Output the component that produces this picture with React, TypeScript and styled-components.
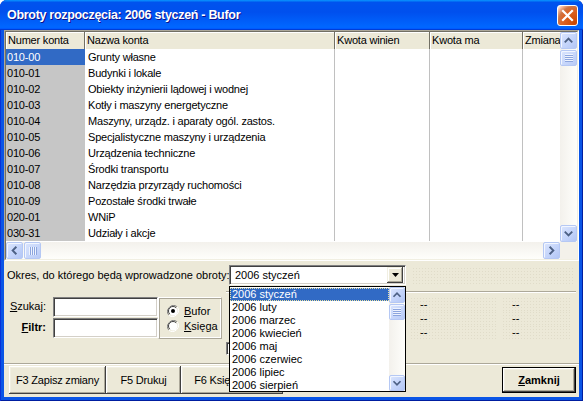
import styled, { createGlobalStyle } from "styled-components";

const GlobalStyle = createGlobalStyle`
  html, body { margin: 0; padding: 0; background: #ffffff; }
  body { font-family: "Liberation Sans", Arial, sans-serif; font-size: 11px; color: #000; }
  * { box-sizing: border-box; }
`;

const accounts = [
  ["010-00", "Grunty własne"],
  ["010-01", "Budynki i lokale"],
  ["010-02", "Obiekty inżynierii lądowej i wodnej"],
  ["010-03", "Kotły i maszyny energetyczne"],
  ["010-04", "Maszyny, urządz. i aparaty ogól. zastos."],
  ["010-05", "Specjalistyczne maszyny i urządzenia"],
  ["010-06", "Urządzenia techniczne"],
  ["010-07", "Środki transportu"],
  ["010-08", "Narzędzia przyrządy ruchomości"],
  ["010-09", "Pozostałe środki trwałe"],
  ["020-01", "WNiP"],
  ["030-31", "Udziały i akcje"],
];

const months = [
  "2006 styczeń",
  "2006 luty",
  "2006 marzec",
  "2006 kwiecień",
  "2006 maj",
  "2006 czerwiec",
  "2006 lipiec",
  "2006 sierpień",
];

const COLS = "79px 250px 95px 93px 90px";

const Window = styled.div`
  width: 583px;
  height: 401px;
  display: flex;
  flex-direction: column;
  background: #0a55e6;
  border-radius: 7px 7px 0 0;
  overflow: hidden;
  box-shadow: inset 1px 0 #0831d9, inset -1px 0 #001ea0, inset 0 -1px #001ea0;
`;

const TitleBar = styled.div`
  height: 30px;
  flex: none;
  display: flex;
  align-items: center;
  padding: 0 5px 0 7px;
  background: linear-gradient(
    180deg,
    #0997ff,
    #0053ee 8%,
    #0050ee 40%,
    #0066ff 88%,
    #0066ff 93%,
    #005bff 95%,
    #003dd7 96%,
    #003dd7
  );
`;

const Title = styled.div`
  flex: 1;
  color: #fff;
  font-weight: bold;
  font-size: 12.5px;
  letter-spacing: -0.3px;
  text-shadow: 1px 1px #0f1089;
`;

const CloseButton = styled.div`
  width: 21px;
  height: 21px;
  border: 1px solid #fff;
  border-radius: 3px;
  display: flex;
  align-items: center;
  justify-content: center;
  background: radial-gradient(
    circle at 90% 90%,
    #cc4600 0%,
    #dc6527 55%,
    #cd7546 70%,
    #ffccb2 90%,
    #fff 100%
  );
`;

const Client = styled.div`
  flex: 1;
  margin: 0 4px 4px;
  background: #ece9d8;
  display: flex;
  flex-direction: column;
`;

const GridFrame = styled.div`
  height: 231px;
  border: 1px solid;
  border-color: #aca899 #fff #fff #aca899;
`;

const GridInner = styled.div`
  height: 100%;
  border: 1px solid;
  border-color: #716f64 #f1efe2 #f1efe2 #716f64;
  display: grid;
  grid-template-columns: 1fr 17px;
  grid-template-rows: 1fr 17px;
`;

const TableArea = styled.div`
  overflow: hidden;
  background: #fff;
  letter-spacing: -0.2px;
`;

const HeaderRow = styled.div`
  display: grid;
  grid-template-columns: ${COLS};
  height: 17px;
`;

const HeaderCell = styled.div`
  background: #ece9d8;
  border-right: 1px solid #716f64;
  box-shadow: inset 1px 1px #fff;
  padding-left: 2px;
  line-height: 16px;
  white-space: nowrap;
  overflow: hidden;
`;

const BodyRow = styled.div`
  display: grid;
  grid-template-columns: ${COLS};
  height: 16px;
`;

const Cell = styled.div<{ $kind?: "code" | "selected" | "line" | "plain" }>`
  line-height: 16px;
  white-space: nowrap;
  overflow: hidden;
  padding-left: ${(p) => (p.$kind === "code" || p.$kind === "selected" ? "1px" : "3px")};
  background: ${(p) =>
    p.$kind === "selected" ? "#316ac5" : p.$kind === "code" ? "#c6c6c6" : "#fff"};
  color: ${(p) => (p.$kind === "selected" ? "#fff" : "#000")};
  border-right: ${(p) => (p.$kind === "line" ? "1px solid #c0c0c0" : "none")};
`;

const VScroll = styled.div<{ $w?: number }>`
  display: flex;
  flex-direction: column;
  width: ${(p) => p.$w ?? 17}px;
  background: linear-gradient(90deg, #f3f1ec, #fefefb);
`;

const HScroll = styled.div`
  display: flex;
  flex-direction: row;
  background: linear-gradient(180deg, #f3f1ec, #fefefb);
`;

const Corner = styled.div`
  background: #f3f1ea;
`;

const ScrollButton = styled.div<{ $size?: number }>`
  flex: none;
  width: ${(p) => p.$size ?? 17}px;
  height: ${(p) => p.$size ?? 17}px;
  border: 1px solid #b5c8f4;
  border-radius: 2px;
  box-shadow: inset 1px 1px #f2f6ff;
  background: linear-gradient(135deg, #dbe5fd 0%, #c6d6fb 50%, #b3c6f5 100%);
  display: flex;
  align-items: center;
  justify-content: center;
`;

const Thumb = styled.div<{ $vertical?: boolean; $size?: number }>`
  flex: none;
  width: ${(p) => (p.$vertical ? `${p.$size ?? 17}px` : "17px")};
  height: ${(p) => (p.$vertical ? "16px" : `${p.$size ?? 17}px`)};
  margin: ${(p) => (p.$vertical ? "1px 0 0" : "0 0 0 1px")};
  border: 1px solid #b5c8f4;
  border-radius: 2px;
  box-shadow: inset 1px 1px #f2f6ff;
  background: linear-gradient(135deg, #dbe5fd 0%, #c9d8fb 50%, #b8caf6 100%);
  display: flex;
  align-items: center;
  justify-content: center;
`;

const Track = styled.div`
  flex: 1;
`;

const PeriodRow = styled.div`
  margin-top: 4px;
  height: 20px;
  display: flex;
  align-items: center;
`;

const PeriodLabel = styled.div`
  width: 225px;
  padding-left: 3px;
  white-space: nowrap;
`;

const ComboWrap = styled.div`
  position: relative;
  width: 177px;
  height: 20px;
  flex: none;
`;

const Combo = styled.div`
  height: 20px;
  display: flex;
  align-items: center;
  background: #fff;
  border: 1px solid;
  border-color: #808080 #fff #fff #808080;
  box-shadow: inset 1px 1px #404040, inset -1px -1px #d4d0c8;
  padding: 0 2px 0 5px;
`;

const ComboText = styled.div`
  flex: 1;
`;

const ComboButton = styled.div`
  width: 16px;
  height: 16px;
  background: #ece9d8;
  box-shadow: inset -1px -1px #404040, inset 1px 1px #f1efe2, inset -2px -2px #aca899, inset 2px 2px #fff;
  display: flex;
  align-items: center;
  justify-content: center;
`;

const DottedFill = styled.div`
  flex: 1;
  height: 17px;
  margin: 0 6px 0 6px;
  background-image: radial-gradient(circle, #e0dcc9 0.7px, transparent 0.9px);
  background-size: 3px 3px;
`;

const DropList = styled.div`
  position: absolute;
  top: 21px;
  left: 0;
  width: 177px;
  height: 106px;
  border: 1px solid #000;
  background: #fff;
  z-index: 10;
  display: flex;
`;

const ListItems = styled.div`
  flex: 1;
  padding-top: 1px;
`;

const ListItem = styled.div<{ $selected?: boolean }>`
  height: 13px;
  line-height: 13px;
  padding-left: 2px;
  white-space: nowrap;
  background: ${(p) => (p.$selected ? "#316ac5" : "transparent")};
  color: ${(p) => (p.$selected ? "#fff" : "#000")};
  outline: ${(p) => (p.$selected ? "1px dotted #e8e0a0" : "none")};
  outline-offset: -1px;
`;

const Middle = styled.div`
  flex: 1;
  display: flex;
`;

const SearchArea = styled.div`
  display: flex;
  padding: 12px 0 0 5px;
  align-items: flex-start;
`;

const Fields = styled.div`
  display: grid;
  grid-template-columns: 37px 105px;
  grid-auto-rows: 20px;
  column-gap: 7px;
  row-gap: 1px;
`;

const FieldLabel = styled.div<{ $bold?: boolean }>`
  text-align: right;
  line-height: 18px;
  font-weight: ${(p) => (p.$bold ? "bold" : "normal")};
`;

const Input = styled.div`
  background: #fff;
  border: 1px solid;
  border-color: #808080 #fff #fff #808080;
  box-shadow: inset 1px 1px #404040, inset -1px -1px #d4d0c8;
`;

const RadioBox = styled.div`
  width: 64px;
  height: 42px;
  border: 1px solid;
  border-color: #fff #aca899 #aca899 #fff;
  box-shadow: inset 1px 1px #aca899, inset -1px -1px #fff;
  display: flex;
  flex-direction: column;
  justify-content: center;
  gap: 1px;
  padding-left: 8px;
`;

const RadioRow = styled.div`
  display: flex;
  align-items: center;
  gap: 5px;
  height: 14px;
`;

const Stats = styled.div`
  flex: 1;
  margin: 6px 3px 0 4px;
  border-top: 1px solid #aca899;
  box-shadow: inset 0 1px #fff;
  padding-top: 5px;
`;

const StatRow = styled.div`
  display: grid;
  grid-template-columns: 184px 92px 1fr;
  height: 14px;
`;

const StatValue = styled.div`
  line-height: 14px;
  padding-left: 10px;
  margin-right: 6px;
  background-image: radial-gradient(circle, #e0dcc9 0.7px, transparent 0.9px);
  background-size: 3px 3px;
`;

const CheckBox = styled.div`
  width: 13px;
  height: 13px;
  margin-top: 3px;
  background: #fff;
  border: 1px solid;
  border-color: #808080 #fff #fff #808080;
  box-shadow: inset 1px 1px #404040, inset -1px -1px #d4d0c8;
`;

const Separator = styled.div`
  height: 2px;
  border-top: 1px solid #aca899;
  border-bottom: 1px solid #fff;
`;

const ButtonBar = styled.div`
  height: 32px;
  display: flex;
  align-items: center;
  padding: 0 3px 2px 5px;
`;

const Button = styled.div<{ $w: number; $default?: boolean }>`
  width: ${(p) => p.$w}px;
  height: ${(p) => (p.$default ? 26 : 28)}px;
  margin-left: ${(p) => (p.$default ? "auto" : "0")};
  display: flex;
  align-items: center;
  justify-content: center;
  white-space: nowrap;
  overflow: hidden;
  letter-spacing: ${(p) => (p.$default ? "0" : "-0.2px")};
  background: #ece9d8;
  font-weight: ${(p) => (p.$default ? "bold" : "normal")};
  border: ${(p) => (p.$default ? "1px solid #000" : "none")};
  box-shadow: inset -1px -1px #404040, inset 1px 1px #fff, inset -2px -2px #aca899,
    inset 2px 2px #f1efe2;
`;

const Chevron = ({ dir, size = 15 }: { dir: "up" | "down" | "left" | "right"; size?: number }) => {
  const pts = {
    up: "4,10 8,6 12,10",
    down: "4,6 8,10 12,6",
    left: "10,4 6,8 10,12",
    right: "6,4 10,8 6,12",
  }[dir];
  return (
    <svg width={size} height={size} viewBox="0 0 16 16">
      <polyline points={pts} fill="none" stroke="#4d6185" strokeWidth="2" />
    </svg>
  );
};

const Grip = ({ vertical }: { vertical?: boolean }) => (
  <svg width="8" height="8" viewBox="0 0 8 8">
    {[1, 3, 5, 7].map((v) =>
      vertical ? (
        <line key={v} x1="0" y1={v - 0.5} x2="8" y2={v - 0.5} stroke="#eef3fe" strokeWidth="1" />
      ) : (
        <line key={v} x1={v - 0.5} y1="0" x2={v - 0.5} y2="8" stroke="#eef3fe" strokeWidth="1" />
      ),
    )}
    {[2, 4, 6, 8].map((v) =>
      vertical ? (
        <line key={v} x1="0" y1={v - 0.5} x2="8" y2={v - 0.5} stroke="#8ca5de" strokeWidth="1" />
      ) : (
        <line key={v} x1={v - 0.5} y1="0" x2={v - 0.5} y2="8" stroke="#8ca5de" strokeWidth="1" />
      ),
    )}
  </svg>
);

const Radio = ({ checked }: { checked?: boolean }) => (
  <svg width="12" height="12" viewBox="0 0 12 12">
    <path d="M10.2 1.8 A6 6 0 0 0 1.8 10.2" fill="none" stroke="#808080" />
    <path d="M1.8 10.2 A6 6 0 0 0 10.2 1.8" fill="none" stroke="#fff" />
    <circle cx="6" cy="6" r="4.5" fill="#fff" />
    <path d="M9.2 2.8 A4.5 4.5 0 0 0 2.8 9.2" fill="none" stroke="#404040" />
    {checked && <circle cx="6" cy="6" r="2" fill="#000" />}
  </svg>
);

const App = () => {
  return (
    <>
      <GlobalStyle />
      <Window>
        <TitleBar>
          <Title>Obroty rozpoczęcia: 2006 styczeń - Bufor</Title>
          <CloseButton>
            <svg width="13" height="13" viewBox="0 0 13 13">
              <path d="M2 2 L11 11 M11 2 L2 11" stroke="#fff" strokeWidth="2.2" strokeLinecap="square" />
            </svg>
          </CloseButton>
        </TitleBar>
        <Client>
          <GridFrame>
            <GridInner>
              <TableArea>
                <HeaderRow>
                  <HeaderCell>Numer konta</HeaderCell>
                  <HeaderCell>Nazwa konta</HeaderCell>
                  <HeaderCell>Kwota winien</HeaderCell>
                  <HeaderCell>Kwota ma</HeaderCell>
                  <HeaderCell>Zmiana</HeaderCell>
                </HeaderRow>
                {accounts.map(([code, name], i) => (
                  <BodyRow key={code}>
                    <Cell $kind={i === 0 ? "selected" : "code"}>{code}</Cell>
                    <Cell $kind="line">{name}</Cell>
                    <Cell $kind="line" />
                    <Cell $kind="line" />
                    <Cell $kind="plain" />
                  </BodyRow>
                ))}
              </TableArea>
              <VScroll>
                <ScrollButton>
                  <Chevron dir="up" />
                </ScrollButton>
                <Thumb $vertical>
                  <Grip vertical />
                </Thumb>
                <Track />
                <ScrollButton>
                  <Chevron dir="down" />
                </ScrollButton>
              </VScroll>
              <HScroll>
                <ScrollButton>
                  <Chevron dir="left" />
                </ScrollButton>
                <Thumb>
                  <Grip />
                </Thumb>
                <Track />
                <ScrollButton>
                  <Chevron dir="right" />
                </ScrollButton>
              </HScroll>
              <Corner />
            </GridInner>
          </GridFrame>

          <PeriodRow>
            <PeriodLabel>Okres, do którego będą wprowadzone obroty:</PeriodLabel>
            <ComboWrap>
              <Combo>
                <ComboText>2006 styczeń</ComboText>
                <ComboButton>
                  <svg width="7" height="4" viewBox="0 0 7 4">
                    <path d="M0 0 H7 L3.5 4 Z" fill="#000" />
                  </svg>
                </ComboButton>
              </Combo>
              <DropList>
                <ListItems>
                  {months.map((m, i) => (
                    <ListItem key={m} $selected={i === 0}>
                      {m}
                    </ListItem>
                  ))}
                </ListItems>
                <VScroll $w={16}>
                  <ScrollButton $size={16}>
                    <Chevron dir="up" size={14} />
                  </ScrollButton>
                  <Thumb $vertical $size={16}>
                    <Grip vertical />
                  </Thumb>
                  <Track />
                  <ScrollButton $size={16}>
                    <Chevron dir="down" size={14} />
                  </ScrollButton>
                </VScroll>
              </DropList>
            </ComboWrap>
            <DottedFill />
          </PeriodRow>

          <Middle>
            <SearchArea>
              <Fields>
                <FieldLabel>
                  <u>S</u>zukaj:
                </FieldLabel>
                <Input />
                <FieldLabel $bold>
                  <u>F</u>iltr:
                </FieldLabel>
                <Input />
              </Fields>
              <RadioBox>
                <RadioRow>
                  <Radio checked />
                  <span>
                    <u>B</u>ufor
                  </span>
                </RadioRow>
                <RadioRow>
                  <Radio />
                  <span>
                    <u>K</u>sięga
                  </span>
                </RadioRow>
              </RadioBox>
            </SearchArea>
            <Stats>
              {[0, 1, 2].map((r) => (
                <StatRow key={r}>
                  <div />
                  <StatValue>--</StatValue>
                  <StatValue>--</StatValue>
                </StatRow>
              ))}
              <CheckBox />
            </Stats>
          </Middle>

          <Separator />
          <ButtonBar>
            <Button $w={97}>F3 Zapisz zmiany</Button>
            <Button $w={75}>F5 Drukuj</Button>
            <Button $w={102}>F6 Księgowanie</Button>
            <Button $w={74} $default>
              <u>Z</u>amknij
            </Button>
          </ButtonBar>
        </Client>
      </Window>
    </>
  );
};

export default App;
